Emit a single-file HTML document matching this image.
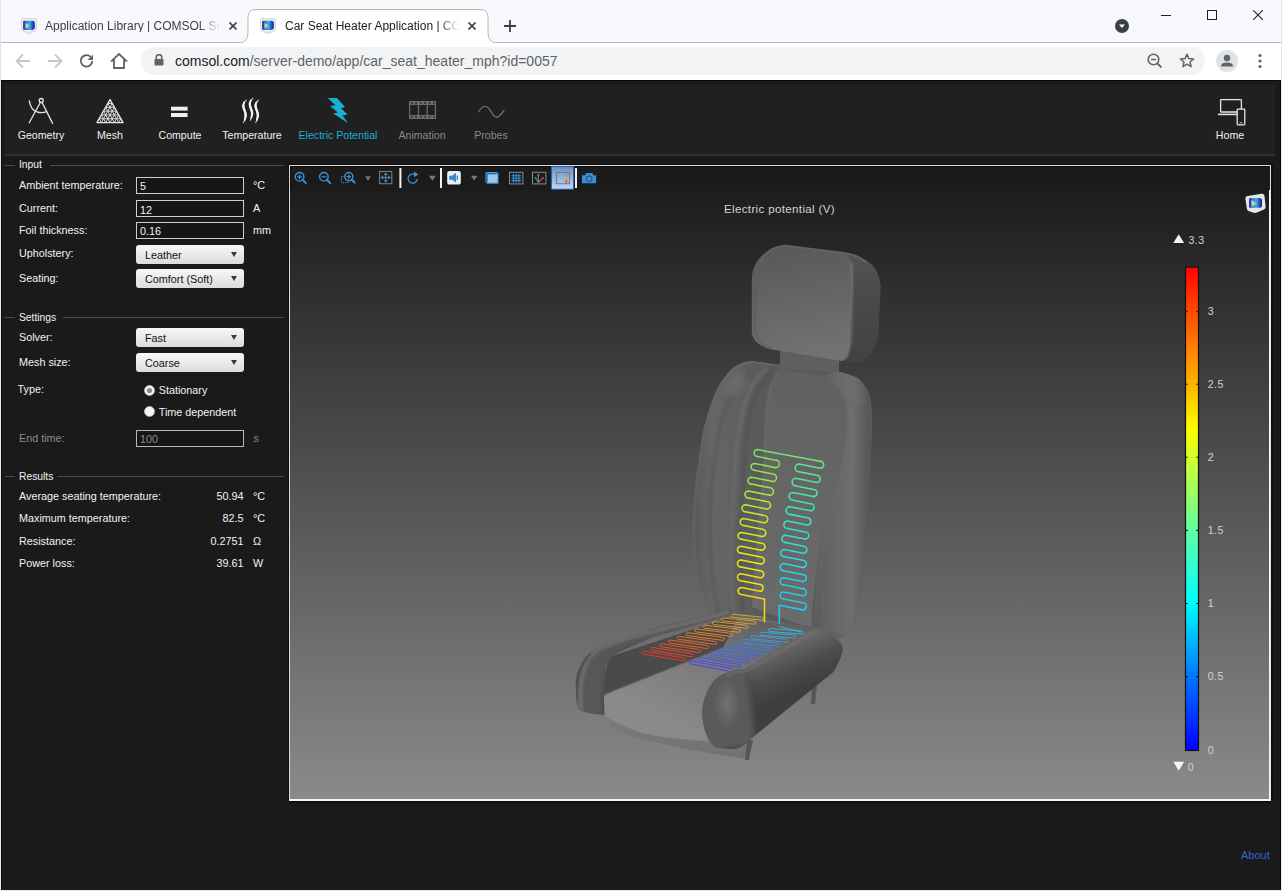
<!DOCTYPE html>
<html><head><meta charset="utf-8">
<style>
*{box-sizing:border-box}
html,body{margin:0;padding:0}
body{width:1282px;height:891px;overflow:hidden;position:relative;background:#1a1a1a;font-family:"Liberation Sans",sans-serif}
.a{position:absolute}
.t{position:absolute;white-space:nowrap;line-height:1}
/* chrome */
#tabstrip{left:0;top:0;width:1282px;height:43px;background:#f8f9fd;border-bottom:1px solid #b5b7ba}
#toolbar{left:0;top:43px;width:1282px;height:37px;background:#fff}
#omni{left:141px;top:47px;width:1064px;height:28px;border-radius:14px;background:#f1f3f4}
.tabtxt{font-size:12px;color:#3c4043}
/* app */
#app{left:1px;top:80px;width:1280px;height:810px;background:#1a1a1a;border-top:1px solid #0c0c0c;border-left:1px solid #0c0c0c;border-right:1px solid #0c0c0c}
#ribbon{left:5px;top:84px;width:1270px;height:72px;background:#202020;border-bottom:2px solid #2f2f2f}
.rl{font-size:10.6px;color:#f0f0f0;text-align:center}
.lbl{font-size:10.8px;color:#f2f2f2}
.legend{font-size:10.3px;color:#f2f2f2}
.lline{height:1px;background:#4c4c4c}
.inp{width:108px;height:17px;border:1px solid #cfcfcf;background:#161616;color:#f2f2f2;font-size:10.8px;padding:3px 0 0 4px}
.combo{width:108px;height:19px;border-radius:3px;background:linear-gradient(#f7f7f7,#dcdcdc);color:#1a1a1a;font-size:10.8px;padding:4px 0 0 8px}
.combo:after{content:"";position:absolute;right:7px;top:7px;border-left:3.5px solid transparent;border-right:3.5px solid transparent;border-top:5px solid #3a3a3a}
.val{font-size:10.8px;color:#f2f2f2;text-align:right}
</style></head>
<body>
<!-- window border -->
<div class="a" style="left:0;top:0;width:1282px;height:891px;border:1px solid #e5e6ea;border-top:0;z-index:50;pointer-events:none"></div>

<div id="tabstrip" class="a"></div>
<!-- active tab -->
<svg class="a" style="left:238px;top:9px" width="262" height="35" viewBox="0 0 262 35">
  <path d="M0 34 Q10 34 10 24 L10 8 Q10 0.5 18 0.5 L242 0.5 Q250 0.5 250 8 L250 24 Q250 34 260 34 L262 34 L262 35 L0 35 Z" fill="#fff" stroke="#b5b7ba" stroke-width="1"/>
  <rect x="0" y="34" width="262" height="2" fill="#fff"/>
</svg>
<!-- favicons -->
<svg class="a" style="left:21px;top:18px" width="16" height="16" viewBox="0 0 16 16"><path d="M0.6 1.4 Q0.6 0.6 1.4 0.6 L14.6 0.6 Q15.4 0.6 15.4 1.4 L15.4 11.6 Q15.4 12.4 14.6 12.8 L8.8 15.3 Q8 15.6 7.2 15.3 L1.4 12.8 Q0.6 12.4 0.6 11.6 Z" fill="#ececec" stroke="#cfcfcf" stroke-width="0.8"/><rect x="2.2" y="2.7" width="11.6" height="9.2" rx="2.4" fill="url(#lgb)"/><rect x="2.2" y="2.7" width="2" height="9.2" rx="1" fill="#3a3ac8"/><path d="M4.6 4.9 L4.6 10.6 L9.6 7.7 Z" fill="url(#lgy)"/></svg>
<svg class="a" style="left:260px;top:18px" width="16" height="16" viewBox="0 0 16 16"><path d="M0.6 1.4 Q0.6 0.6 1.4 0.6 L14.6 0.6 Q15.4 0.6 15.4 1.4 L15.4 11.6 Q15.4 12.4 14.6 12.8 L8.8 15.3 Q8 15.6 7.2 15.3 L1.4 12.8 Q0.6 12.4 0.6 11.6 Z" fill="#ececec" stroke="#cfcfcf" stroke-width="0.8"/><rect x="2.2" y="2.7" width="11.6" height="9.2" rx="2.4" fill="url(#lgb)"/><rect x="2.2" y="2.7" width="2" height="9.2" rx="1" fill="#3a3ac8"/><path d="M4.6 4.9 L4.6 10.6 L9.6 7.7 Z" fill="url(#lgy)"/></svg>
<div class="t tabtxt" style="left:45px;top:20px;width:175px;overflow:hidden;-webkit-mask-image:linear-gradient(90deg,#000 88%,transparent)">Application Library | COMSOL Server</div>
<div class="t tabtxt" style="left:285px;top:20px;width:174px;overflow:hidden;color:#202124;-webkit-mask-image:linear-gradient(90deg,#000 88%,transparent)">Car Seat Heater Application | COMSOL</div>
<!-- tab close -->
<svg class="a" style="left:229px;top:22px" width="8" height="8"><path d="M0.5 0.5 L7.5 7.5 M7.5 0.5 L0.5 7.5" stroke="#3c4043" stroke-width="1.6"/></svg>
<svg class="a" style="left:468px;top:22px" width="8" height="8"><path d="M0.5 0.5 L7.5 7.5 M7.5 0.5 L0.5 7.5" stroke="#3c4043" stroke-width="1.6"/></svg>
<!-- plus -->
<svg class="a" style="left:504px;top:20px" width="12" height="12"><path d="M6 0 V12 M0 6 H12" stroke="#3c4043" stroke-width="1.8"/></svg>
<!-- dropdown circle -->
<svg class="a" style="left:1115px;top:19px" width="14" height="14"><circle cx="7" cy="7" r="7" fill="#3c4043"/><path d="M4 5.5 L10 5.5 L7 9 Z" fill="#fff"/></svg>
<!-- window controls -->
<div class="a" style="left:1161px;top:15px;width:10px;height:1px;background:#202124"></div>
<div class="a" style="left:1207px;top:10px;width:10px;height:10px;border:1px solid #202124"></div>
<svg class="a" style="left:1253px;top:10px" width="10" height="10"><path d="M0 0 L10 10 M10 0 L0 10" stroke="#202124" stroke-width="1.1"/></svg>

<div id="toolbar" class="a"></div>
<!-- nav icons -->
<svg class="a" style="left:15px;top:53px" width="16" height="16" viewBox="0 0 16 16"><path d="M15 8 H2 M8 1.5 L1.5 8 L8 14.5" fill="none" stroke="#c4c6c9" stroke-width="1.8"/></svg>
<svg class="a" style="left:47px;top:53px" width="16" height="16" viewBox="0 0 16 16"><path d="M1 8 H14 M8 1.5 L14.5 8 L8 14.5" fill="none" stroke="#c4c6c9" stroke-width="1.8"/></svg>
<svg class="a" style="left:79px;top:53px" width="16" height="16" viewBox="0 0 16 16"><path d="M13.2 8 A5.7 5.7 0 1 1 11.5 3.8" fill="none" stroke="#5f6368" stroke-width="1.9"/><path d="M14 1.5 L14 7 L8.5 7 Z" fill="#5f6368"/></svg>
<svg class="a" style="left:110px;top:52px" width="18" height="18" viewBox="0 0 18 18"><path d="M9 2 L16 8.5 L14 8.5 L14 16 L4 16 L4 8.5 L2 8.5 Z" fill="none" stroke="#5f6368" stroke-width="1.8" stroke-linejoin="miter"/></svg>
<div id="omni" class="a"></div>
<svg class="a" style="left:154px;top:54px" width="10" height="12" viewBox="0 0 10 12"><path d="M2.2 5 V3.5 A2.8 2.8 0 0 1 7.8 3.5 V5" fill="none" stroke="#5f6368" stroke-width="1.5"/><rect x="0.5" y="5" width="9" height="6.5" rx="0.8" fill="#5f6368"/></svg>
<div class="t" style="left:175px;top:54px;font-size:14px;color:#5f6368"><span style="color:#202124">comsol.com</span>/server-demo/app/car_seat_heater_mph?id=0057</div>
<svg class="a" style="left:1146px;top:52px" width="18" height="18" viewBox="0 0 18 18"><circle cx="7.5" cy="7.5" r="5.3" fill="none" stroke="#5f6368" stroke-width="1.6"/><path d="M11.3 11.3 L15.5 15.5" stroke="#5f6368" stroke-width="1.8"/><path d="M5 7.5 H10" stroke="#5f6368" stroke-width="1.5"/></svg>
<svg class="a" style="left:1178px;top:52px" width="18" height="18" viewBox="0 0 18 18"><path d="M9 2.2 L10.9 6.6 L15.6 6.9 L12 10 L13.1 14.7 L9 12.2 L4.9 14.7 L6 10 L2.4 6.9 L7.1 6.6 Z" fill="none" stroke="#5f6368" stroke-width="1.5" stroke-linejoin="round"/></svg>
<svg class="a" style="left:1216px;top:50px" width="22" height="22" viewBox="0 0 22 22"><circle cx="11" cy="11" r="11" fill="#dee1e6"/><circle cx="11" cy="8" r="3.2" fill="#5f6368"/><path d="M5 16.5 Q5 12.5 11 12.5 Q17 12.5 17 16.5 Z" fill="#5f6368"/></svg>
<svg class="a" style="left:1256px;top:53px" width="8" height="16"><circle cx="4" cy="2.5" r="1.6" fill="#5f6368"/><circle cx="4" cy="8" r="1.6" fill="#5f6368"/><circle cx="4" cy="13.5" r="1.6" fill="#5f6368"/></svg>

<!-- ============ APP ============ -->
<div id="app" class="a"></div>
<div id="ribbon" class="a"></div>

<!-- ribbon items -->

<!-- ribbon icons -->
<svg class="a" style="left:24px;top:94px" width="36" height="34" viewBox="0 0 36 34" fill="none" stroke="#e6e6e6" stroke-width="1.3" stroke-linecap="round">
  <circle cx="17.2" cy="6.5" r="2"/>
  <path d="M16.3 8.5 L5.2 28.8 M18.1 8.5 L28.6 29.4"/>
  <path d="M5.3 6.9 Q7 16.5 13 17.8 Q18 19.6 22.5 17.6"/>
</svg>
<svg class="a" style="left:95px;top:98px" width="30" height="27" viewBox="0 0 30 27">
  <path d="M15 1.7000000000000028 L28 24.599999999999994 L2 24.599999999999994 Z" fill="none" stroke="#e8e8e8" stroke-width="1.4" stroke-linejoin="round"/>
  <path d="M12.83 5.52H17.17M6.33 24.60L17.17 5.52M6.33 24.60L4.17 20.78M10.67 9.33H19.33M10.67 24.60L19.33 9.33M10.67 24.60L6.33 16.97M8.50 13.15H21.50M15.00 24.60L21.50 13.15M15.00 24.60L8.50 13.15M6.33 16.97H23.67M19.33 24.60L23.67 16.97M19.33 24.60L10.67 9.33M4.17 20.78H25.83M23.67 24.60L25.83 20.78M23.67 24.60L12.83 5.52" stroke="#dcdcdc" stroke-width="1.0" fill="none"/>
</svg>
<svg class="a" style="left:170px;top:105px" width="19" height="14"><rect x="1" y="1.7" width="16.6" height="3.9" fill="#f0f0f0"/><rect x="1" y="8" width="16.6" height="4" fill="#f0f0f0"/></svg>
<svg class="a" style="left:236px;top:94px" width="32" height="34" viewBox="0 0 32 34" fill="none" stroke="#f2f2f2" stroke-linecap="round"><path d="M10.3 6.1 C6 10 7 13 8.6 16.5 C10.6 20.5 9.5 24.5 7.6 28.6" stroke-width="1.1" opacity="0.85"/><path d="M10.3 6.1 C6 10 7 13 8.6 16.5 C10.6 20.5 9.5 24.5 7.6 28.6" pathLength="100" stroke-dasharray="76 24" stroke-dashoffset="-12" stroke-width="1.9"/><path d="M10.3 6.1 C6 10 7 13 8.6 16.5 C10.6 20.5 9.5 24.5 7.6 28.6" pathLength="100" stroke-dasharray="50 50" stroke-dashoffset="-25" stroke-width="2.3"/><path d="M16.8 4.4 C12.5 8 13.5 11 15 15 C17 18.5 16 22.5 14.3 26.3" stroke-width="1.1" opacity="0.85"/><path d="M16.8 4.4 C12.5 8 13.5 11 15 15 C17 18.5 16 22.5 14.3 26.3" pathLength="100" stroke-dasharray="76 24" stroke-dashoffset="-12" stroke-width="1.9"/><path d="M16.8 4.4 C12.5 8 13.5 11 15 15 C17 18.5 16 22.5 14.3 26.3" pathLength="100" stroke-dasharray="50 50" stroke-dashoffset="-25" stroke-width="2.3"/><path d="M22.5 6.1 C18.2 10 19.2 13 20.8 16.5 C22.8 20.5 21.7 24.5 19.8 28.6" stroke-width="1.1" opacity="0.85"/><path d="M22.5 6.1 C18.2 10 19.2 13 20.8 16.5 C22.8 20.5 21.7 24.5 19.8 28.6" pathLength="100" stroke-dasharray="76 24" stroke-dashoffset="-12" stroke-width="1.9"/><path d="M22.5 6.1 C18.2 10 19.2 13 20.8 16.5 C22.8 20.5 21.7 24.5 19.8 28.6" pathLength="100" stroke-dasharray="50 50" stroke-dashoffset="-25" stroke-width="2.3"/></svg>
<svg class="a" style="left:320px;top:92px" width="36" height="36" viewBox="0 0 36 36"><path d="M7.7 6.1 L17 6.1 L25 15 L21 16.2 L27.5 22.6 L22.6 23.4 L27.9 31.1 L13.3 21.4 L17.8 20.6 L10.1 14.1 L15.4 13.3 Z" fill="#19b1d2"/></svg>
<svg class="a" style="left:409px;top:101px" width="27" height="18" viewBox="0 0 27 18">
  <rect x="0.6" y="0.6" width="25.8" height="16.8" fill="none" stroke="#6b6b6b" stroke-width="1.2"/>
  <rect x="0" y="0" width="27" height="4" fill="#6b6b6b"/><rect x="0" y="14" width="27" height="4" fill="#6b6b6b"/>
  <path d="M9.5 0 V18 M18.2 0 V18" stroke="#6b6b6b" stroke-width="1.3"/>
  <g fill="#2a2a2a"><rect x="2" y="1.3" width="1.6" height="1.6"/><rect x="6.3" y="1.3" width="1.6" height="1.6"/><rect x="11" y="1.3" width="1.6" height="1.6"/><rect x="15.3" y="1.3" width="1.6" height="1.6"/><rect x="19.8" y="1.3" width="1.6" height="1.6"/><rect x="24" y="1.3" width="1.6" height="1.6"/>
  <rect x="2" y="15.1" width="1.6" height="1.6"/><rect x="6.3" y="15.1" width="1.6" height="1.6"/><rect x="11" y="15.1" width="1.6" height="1.6"/><rect x="15.3" y="15.1" width="1.6" height="1.6"/><rect x="19.8" y="15.1" width="1.6" height="1.6"/><rect x="24" y="15.1" width="1.6" height="1.6"/></g>
</svg>
<svg class="a" style="left:476px;top:102px" width="32" height="18" viewBox="0 0 32 18"><path d="M2.9 9.8 C5 5.5 7.5 4.4 9 4.4 C12 4.4 14 8 16 11 C18 14.5 19.5 15.2 20.6 15.2 C23 15.2 25.5 12 28 8.5" fill="none" stroke="#6b6b6b" stroke-width="1.4" stroke-linecap="round"/></svg>
<svg class="a" style="left:1216px;top:97px" width="32" height="30" viewBox="0 0 32 30" fill="none" stroke="#e6e6e6">
  <rect x="4.6" y="2.6" width="20.8" height="12.4" rx="0.8" stroke-width="1.3"/>
  <path d="M2 17.4 H21" stroke-width="1.6"/>
  <rect x="21.2" y="12.2" width="7.6" height="15.6" rx="0.8" fill="#202020" stroke-width="1.3"/>
  <path d="M23.5 25.8 H26.5" stroke-width="0.8"/>
</svg>
<!-- ribbon labels -->
<div class="t rl" style="left:1px;top:130px;width:80px">Geometry</div>
<div class="t rl" style="left:70px;top:130px;width:80px">Mesh</div>
<div class="t rl" style="left:140px;top:130px;width:80px">Compute</div>
<div class="t rl" style="left:212px;top:130px;width:80px">Temperature</div>
<div class="t rl" style="left:288px;top:130px;width:100px;color:#1eaed0">Electric Potential</div>
<div class="t rl" style="left:382px;top:130px;width:80px;color:#8a8a8a">Animation</div>
<div class="t rl" style="left:451px;top:130px;width:80px;color:#8a8a8a">Probes</div>
<div class="t rl" style="left:1190px;top:130px;width:80px">Home</div>


<!-- left panel -->
<!-- left panel -->
<div class="a lline" style="left:5px;top:165px;width:10px"></div>
<div class="a lline" style="left:50px;top:165px;width:234px"></div>
<div class="t legend" style="left:19px;top:160.0px;">Input</div>

<div class="a lline" style="left:5px;top:317px;width:10px"></div>
<div class="a lline" style="left:63px;top:317px;width:221px"></div>
<div class="t legend" style="left:19px;top:313.0px;">Settings</div>

<div class="a lline" style="left:5px;top:476px;width:10px"></div>
<div class="a lline" style="left:57px;top:476px;width:227px"></div>
<div class="t legend" style="left:19px;top:472.0px;">Results</div>

<div class="t lbl" style="left:19px;top:179.6px;">Ambient temperature:</div>

<div class="a inp" style="left:136px;top:177px"></div>
<div class="t lbl" style="left:140px;top:181.3px;">5</div>

<div class="t lbl" style="left:253px;top:179.6px;">°C</div>

<div class="t lbl" style="left:19px;top:202.8px;">Current:</div>

<div class="a inp" style="left:136px;top:200px"></div>
<div class="t lbl" style="left:140px;top:204.5px;">12</div>

<div class="t lbl" style="left:253px;top:202.8px;">A</div>

<div class="t lbl" style="left:19px;top:224.6px;">Foil thickness:</div>

<div class="a inp" style="left:136px;top:222px"></div>
<div class="t lbl" style="left:140px;top:226.3px;">0.16</div>

<div class="t lbl" style="left:253px;top:224.6px;">mm</div>

<div class="t lbl" style="left:19px;top:247.5px;">Upholstery:</div>

<div class="a combo" style="left:136px;top:245px"></div>
<div class="t lbl" style="left:145px;top:249.5px;color:#111">Leather</div>

<div class="t lbl" style="left:19px;top:273.0px;">Seating:</div>

<div class="a combo" style="left:136px;top:269px"></div>
<div class="t lbl" style="left:145px;top:274.0px;color:#111">Comfort (Soft)</div>

<div class="t lbl" style="left:19px;top:331.8px;">Solver:</div>

<div class="a combo" style="left:136px;top:328px"></div>
<div class="t lbl" style="left:145px;top:332.8px;color:#111">Fast</div>

<div class="t lbl" style="left:19px;top:357.0px;">Mesh size:</div>

<div class="a combo" style="left:136px;top:353px"></div>
<div class="t lbl" style="left:145px;top:358.0px;color:#111">Coarse</div>

<div class="t lbl" style="left:17.5px;top:384.2px;">Type:</div>

<svg class="a" style="left:144px;top:385px" width="11" height="11"><circle cx="5.5" cy="5.5" r="5" fill="#f4f4f4" stroke="#d0d0d0" stroke-width="0.6"/><circle cx="5.5" cy="5.5" r="2.6" fill="#8c8c8c"/></svg>
<div class="t lbl" style="left:158.7px;top:384.8px;">Stationary</div>

<svg class="a" style="left:144px;top:406px" width="11" height="11"><circle cx="5.5" cy="5.5" r="5" fill="#f4f4f4" stroke="#d0d0d0" stroke-width="0.6"/></svg>
<div class="t lbl" style="left:158.7px;top:406.6px;">Time dependent</div>

<div class="t lbl" style="left:19px;top:433.4px;color:#8a8a8a">End time:</div>

<div class="a inp" style="left:136px;top:430px;border-color:#b8b8b8"></div>
<div class="t lbl" style="left:140px;top:434.1px;color:#8a8a8a">100</div>

<div class="t lbl" style="left:253.5px;top:433.4px;color:#8a8a8a">s</div>

<div class="t lbl" style="left:19px;top:491.1px;">Average seating temperature:</div>

<div class="t val" style="left:163.5px;top:491.1px;width:80px">50.94</div>

<div class="t lbl" style="left:253px;top:491.1px;">°C</div>

<div class="t lbl" style="left:19px;top:512.8px;">Maximum temperature:</div>

<div class="t val" style="left:163.5px;top:512.8px;width:80px">82.5</div>

<div class="t lbl" style="left:253px;top:512.8px;">°C</div>

<div class="t lbl" style="left:19px;top:535.6px;">Resistance:</div>

<div class="t val" style="left:163.5px;top:535.6px;width:80px">0.2751</div>

<div class="t lbl" style="left:253px;top:535.6px;">Ω</div>

<div class="t lbl" style="left:19px;top:557.8px;">Power loss:</div>

<div class="t val" style="left:163.5px;top:557.8px;width:80px">39.61</div>

<div class="t lbl" style="left:253px;top:557.8px;">W</div>


<!-- graphics -->

<!-- graphics -->
<div class="a" style="left:288px;top:164px;width:985px;height:639px;background:#0e0e0e"></div>
<div class="a" style="left:289px;top:165px;width:982px;height:636px;border-style:solid;border-color:#e0e0e0 #e6e6e6 #f6f6f6 #dcdcdc;border-width:1px 1px 2px 1px;background:#1b1b1b;box-shadow:inset 1px 1px 0 #0c0c0c"></div>
<div class="a" style="left:290px;top:190px;width:979px;height:609px;background:linear-gradient(#1d1d1d 0px,#1d1d1d 2px,#8a8a8a 608px)"></div>
<div class="a" style="left:1269px;top:190px;width:1px;height:610px;background:#f6f6f6"></div>
<!-- gfx toolbar -->
<svg class="a" style="left:290px;top:166px" width="320" height="25" viewBox="290 166 320 25">
  <g fill="none" stroke="#3592d8" stroke-width="1.3">
    <rect x="341.3" y="176.6" width="7.2" height="6" stroke-dasharray="1.3 0.9" stroke-width="1"/>
    <circle cx="299.6" cy="176.8" r="4.3" stroke-width="1.4"/><path d="M297.2 176.8 H302 M299.6 174.4 V179.2" stroke-width="1.2"/>
    <circle cx="323.9" cy="176.8" r="4.3" stroke-width="1.4"/><path d="M321.5 176.8 H326.3" stroke-width="1.2"/>
    <circle cx="348.8" cy="176.6" r="4.1" fill="#1b1b1b" stroke-width="1.4"/><path d="M346.6 176.6 H351 M348.8 174.4 V178.8" stroke-width="1.2"/>
    <path d="M302.6 179.8 L305.9 183.1 M326.9 179.8 L330.2 183.1 M351.7 179.5 L354.6 182.6" stroke-width="2" stroke-linecap="round"/>
  </g>
  <path d="M365.1 176.3 H370.9 L368 180.7 Z" fill="#7a7a7a"/>
  <rect x="379.6" y="171.5" width="12.2" height="12.2" fill="none" stroke="#7a7a7a" stroke-width="1.1"/>
  <path d="M385.7 174.2 V181 M382.3 177.6 H389.1" stroke="#8a8a8a" stroke-width="0.9"/>
  <g fill="#3592d8"><path d="M385.7 172.4 L383.7 175 H387.7Z"/><path d="M385.7 182.8 L383.7 180.2 H387.7Z"/><path d="M380.5 177.6 L383.1 175.6 V179.6Z"/><path d="M390.9 177.6 L388.3 175.6 V179.6Z"/></g>
  <rect x="399.4" y="168" width="2" height="20" fill="#f2f2f2"/>
  <path d="M417.3 178.8 A4.6 4.6 0 1 1 414.6 174.4" fill="none" stroke="#2f86c8" stroke-width="1.5"/>
  <path d="M414 171.5 L418.4 174.4 L414 177.2Z" fill="#3592d8"/>
  <path d="M429 175.8 H435.8 L432.4 180.8 Z" fill="#7a7a7a"/>
  <rect x="440" y="168" width="2" height="20" fill="#f2f2f2"/>
  <rect x="447.2" y="171" width="13.6" height="13.6" rx="2.2" fill="#efefef"/>
  <path d="M449.2 175.8 H452 L456 172.8 V182.6 L452 179.8 H449.2Z" fill="#3a8ad2"/><rect x="456.6" y="175.6" width="1.4" height="4.4" fill="#3a8ad2"/>
  <path d="M471 175.8 H477.4 L474.2 180.6 Z" fill="#7a7a7a"/>
  <rect x="487.5" y="174" width="10.5" height="9.2" fill="#9cc8f0" stroke="#3592d8" stroke-width="1.1"/>
  <path d="M486 172.6 H496.5 L498 174 M486 172.6 V181.8 L487.5 183.2" fill="none" stroke="#4aa0e6" stroke-width="1.1"/>
  <rect x="509.5" y="172.3" width="13.4" height="11.6" fill="#1b1b1b" stroke="#8a8a8a" stroke-width="1"/>
  <path d="M511.5 175.8 H521 M511.5 178.2 H521 M511.5 180.6 H521 M513.4 173.8 V182.6 M516.2 173.8 V182.6 M519 173.8 V182.6" stroke="#3592d8" stroke-width="1.1"/>
  <rect x="532.5" y="172.3" width="13.4" height="11.6" fill="#1b1b1b" stroke="#8a8a8a" stroke-width="1"/>
  <path d="M538.4 182.5 V174.3" stroke="#3a9ae6" stroke-width="1.1"/><path d="M538.4 173.4 L537 175.6 H539.8Z" fill="#3a9ae6"/>
  <path d="M538.4 182.5 L535.8 178.3" stroke="#3bb85a" stroke-width="1.1"/><circle cx="535.6" cy="178" r="0.9" fill="#3bb85a"/>
  <path d="M538.4 182.5 L543 177.8" stroke="#e03a80" stroke-width="1.1"/><circle cx="543" cy="177.8" r="0.9" fill="#e03a80"/>
  <defs><linearGradient id="selg" x1="0" y1="0" x2="0" y2="1"><stop offset="0" stop-color="#6b8dc5"/><stop offset="1" stop-color="#bcdcf8"/></linearGradient>
  <linearGradient id="legg" x1="0" y1="0" x2="0" y2="1"><stop offset="0" stop-color="#3a9ae6"/><stop offset="0.5" stop-color="#f5b010"/><stop offset="1" stop-color="#ee2a3a"/></linearGradient></defs>
  <rect x="551.4" y="166.6" width="22.2" height="22.6" fill="url(#selg)" stroke="#2c5fae" stroke-width="1"/>
  <rect x="556.5" y="172.5" width="13" height="11.2" fill="none" stroke="#777" stroke-width="1"/>
  <rect x="565.3" y="173.8" width="1.9" height="8.8" fill="url(#legg)"/>
  <rect x="575" y="168" width="2" height="20" fill="#f2f2f2"/>
  <path d="M582 175.2 H585 L586.2 173 H592.3 L593.4 175.2 H596.1 V183.2 H582Z" fill="#3a8fd6"/>
  <circle cx="589.2" cy="178.8" r="2.9" fill="#3a8fd6" stroke="#1b3f66" stroke-width="0.9"/>
</svg>
<div class="t" style="left:724px;top:203.4px;font-size:11.6px;letter-spacing:0.33px;color:#d4d4d4">Electric potential (V)</div>
<!-- COMSOL logo in view -->
<svg class="a" style="left:1240px;top:190px" width="30" height="26" viewBox="1240 190 30 26">
  <defs><linearGradient id="lgb" x1="0" y1="0" x2="1" y2="0"><stop offset="0" stop-color="#2a4ed8"/><stop offset="0.55" stop-color="#3aa8f0"/><stop offset="1" stop-color="#0a1a9a"/></linearGradient>
  <linearGradient id="lgy" x1="0" y1="0" x2="1" y2="0"><stop offset="0" stop-color="#f8f060"/><stop offset="1" stop-color="#e8d020" stop-opacity="0.4"/></linearGradient></defs>
  <path d="M1245.5 199 Q1245 196.5 1247.5 196 L1261.5 193.8 Q1264 193.5 1264.5 196 L1265.6 206.5 Q1266 208.5 1264 209.5 L1257 212.5 Q1255 213.2 1253 212.6 L1249 211.3 Q1247 210.5 1246.8 208.5 Z" fill="#e6e6e6"/>
  <rect x="1249" y="198" width="13" height="9.8" rx="2.6" fill="url(#lgb)"/>
  <rect x="1249" y="198" width="2.2" height="9.8" rx="1" fill="#3a3ac8"/>
  <path d="M1251.6 200.2 L1251.6 206.6 L1257.6 203.4 Z" fill="url(#lgy)"/>
</svg>
<!-- colorbar -->
<svg class="a" style="left:1165px;top:228px" width="70" height="550" viewBox="1165 228 70 550">
  <defs><linearGradient id="cb" x1="0" y1="0" x2="0" y2="1">
   <stop offset="0" stop-color="#ff0000"/><stop offset="0.091" stop-color="#ff4a00"/><stop offset="0.242" stop-color="#ffb400"/><stop offset="0.337" stop-color="#ffff00"/><stop offset="0.393" stop-color="#d4ff2a"/><stop offset="0.544" stop-color="#60ffa0"/><stop offset="0.693" stop-color="#00ffff"/><stop offset="0.846" stop-color="#0078ff"/><stop offset="1" stop-color="#0000ff"/>
  </linearGradient></defs>
  <rect x="1185.5" y="267" width="13" height="483.5" fill="url(#cb)" stroke="#111" stroke-width="1.2"/>
  <g stroke="#111" stroke-width="1.1">
   <path d="M1185.5 311.3 h2.2 M1198.5 311.3 h-2.2 M1185.5 384.3 h2.2 M1198.5 384.3 h-2.2 M1185.5 457.3 h2.2 M1198.5 457.3 h-2.2 M1185.5 530.4 h2.2 M1198.5 530.4 h-2.2 M1185.5 603.5 h2.2 M1198.5 603.5 h-2.2 M1185.5 676.6 h2.2 M1198.5 676.6 h-2.2"/>
  </g>
  <path d="M1173.3 243 L1178.7 234.2 L1184.1 243 Z" fill="#f4f4f4"/>
  <path d="M1173.3 761.7 L1184.1 761.7 L1178.7 770.7 Z" fill="#f4f4f4"/>
  <g font-family="Liberation Sans" font-size="10.6" fill="#d2d2d2" letter-spacing="0.4">
   <text x="1188.5" y="244">3.3</text>
   <text x="1207.8" y="315">3</text><text x="1207.8" y="388">2.5</text><text x="1207.8" y="461">2</text><text x="1207.8" y="534">1.5</text><text x="1207.8" y="607.3">1</text><text x="1207.8" y="680.4">0.5</text><text x="1207.8" y="753.5">0</text>
   <text x="1187.8" y="770.5">0</text>
  </g>
</svg>
<svg class="a" style="left:290px;top:190px" width="980" height="610" viewBox="290 190 980 610">
<defs>
<linearGradient id="hrF" x1="0" y1="0" x2="0.15" y2="1"><stop offset="0" stop-color="#575757"/><stop offset="1" stop-color="#727272"/></linearGradient>
<linearGradient id="hrS" x1="0" y1="0" x2="0" y2="1"><stop offset="0" stop-color="#545454"/><stop offset="0.4" stop-color="#4a4a4a"/><stop offset="1" stop-color="#424242"/></linearGradient>
<linearGradient id="brB" x1="0" y1="0" x2="0" y2="1"><stop offset="0" stop-color="#555"/><stop offset="1" stop-color="#626262"/></linearGradient>
<linearGradient id="brC" x1="0" y1="0" x2="0" y2="1"><stop offset="0" stop-color="#5c5c5c"/><stop offset="1" stop-color="#6a6a6a"/></linearGradient>
<linearGradient id="brL" x1="0" y1="0" x2="1" y2="0"><stop offset="0" stop-color="#505050"/><stop offset="0.6" stop-color="#626262"/><stop offset="1" stop-color="#5a5a5a"/></linearGradient>
<linearGradient id="brR" x1="0" y1="0" x2="1" y2="0"><stop offset="0" stop-color="#5e5e5e"/><stop offset="0.5" stop-color="#686868"/><stop offset="1" stop-color="#4e4e4e"/></linearGradient>
<linearGradient id="seatF" x1="0" y1="0" x2="0" y2="1"><stop offset="0" stop-color="#8a8a8a"/><stop offset="1" stop-color="#858585"/></linearGradient>
<linearGradient id="lbF" x1="0" y1="0" x2="1" y2="0"><stop offset="0" stop-color="#505050"/><stop offset="0.45" stop-color="#6e6e6e"/><stop offset="1" stop-color="#505050"/></linearGradient>
<linearGradient id="rbS" x1="0" y1="0" x2="0.3" y2="1"><stop offset="0" stop-color="#5a5a5a"/><stop offset="0.5" stop-color="#474747"/><stop offset="1" stop-color="#3e3e3e"/></linearGradient>
<linearGradient id="rbF" x1="0" y1="0" x2="1" y2="0"><stop offset="0" stop-color="#555"/><stop offset="0.35" stop-color="#707070"/><stop offset="1" stop-color="#4a4a4a"/></linearGradient>
</defs>
<defs>
<linearGradient id="brB2" x1="0" y1="0" x2="0" y2="1"><stop offset="0" stop-color="#575757"/><stop offset="1" stop-color="#606060"/></linearGradient>
<linearGradient id="brC2" x1="0" y1="0" x2="0" y2="1"><stop offset="0" stop-color="#616161"/><stop offset="1" stop-color="#6b6b6b"/></linearGradient>
<linearGradient id="brR2" gradientUnits="userSpaceOnUse" x1="812" y1="0" x2="868" y2="0"><stop offset="0" stop-color="#545454"/><stop offset="0.18" stop-color="#626262"/><stop offset="0.72" stop-color="#6e6e6e"/><stop offset="1" stop-color="#585858"/></linearGradient>
<linearGradient id="brL2" gradientUnits="userSpaceOnUse" x1="692" y1="0" x2="760" y2="0"><stop offset="0" stop-color="#585858"/><stop offset="0.3" stop-color="#666666"/><stop offset="0.65" stop-color="#606060"/><stop offset="1" stop-color="#5a5a5a"/></linearGradient>
<filter id="bl3" x="-30%" y="-30%" width="160%" height="160%"><feGaussianBlur stdDeviation="3.5"/></filter>
<filter id="bl15" x="-30%" y="-30%" width="160%" height="160%"><feGaussianBlur stdDeviation="1.5"/></filter>
</defs>
<path d="M734.4 366.9 C740 362.5 746 361 752.2 360.9 L773 363.9 L838 371.3 C848 374 855 376 860.4 380.2 C866 386 869 392 870.7 399.4 C872 410 872.2 420 872.2 429 L869 495 L864 562 C861 590 858 605 856 616 L847 636 L729 612 L711 614 C706 608 704 604 703.6 601 C697 585 693 565 692.6 528.7 C693 505 695 485 698.9 458.7 C701 440 704 425 707.8 414.3 C711 403 715 393 719.6 384.6 C724 377 729 371 734.4 366.9 Z" fill="url(#brL2)"/>
<clipPath id="brclip"><path d="M734.4 366.9 C740 362.5 746 361 752.2 360.9 L773 363.9 L838 371.3 C848 374 855 376 860.4 380.2 C866 386 869 392 870.7 399.4 C872 410 872.2 420 872.2 429 L869 495 L864 562 C861 590 858 605 856 616 L847 636 L729 612 L711 614 C706 608 704 604 703.6 601 C697 585 693 565 692.6 528.7 C693 505 695 485 698.9 458.7 C701 440 704 425 707.8 414.3 C711 403 715 393 719.6 384.6 C724 377 729 371 734.4 366.9 Z"/></clipPath>
<g clip-path="url(#brclip)">
<path d="M823.3 375.7 L838 371.3 C848 374 855 376 860.4 380.2 C866 386 869 392 870.7 399.4 C872 410 872.2 420 872.2 429 L869 495 L864 562 C861 590 858 605 856 616 L847 636 L812 629 C812 610 813 600 813.7 595.7 C817 560 820 545 823.8 528 C830 505 835 490 838 480 C843 460 846 445 847 429 L847 406.9 C845 398 842 393 838 389 C834 383 829 378 823.3 375.7 Z" fill="url(#brR2)"/>
<path d="M736 366 C728 372 723 378 719.6 384.6 C715 393 711 403 707.8 414.3 C704 425 701 440 698.9 458.7 C695 485 693 505 693.5 528.7 C694 565 697 585 704.5 601" fill="none" stroke="#6c6c6c" stroke-width="2.4" opacity="0.7" filter="url(#bl1)"/>
<path d="M750 372 C738 385 728 400 722 420 C715 445 711 480 710 520 C710 560 713 590 718 612" fill="none" stroke="#4e4e4e" stroke-width="3" opacity="0.45" filter="url(#bl15)"/>
<ellipse cx="736" cy="384" rx="9" ry="14" fill="#747474" opacity="0.55" filter="url(#bl3)" transform="rotate(35 736 384)"/>
<ellipse cx="856" cy="394" rx="7" ry="13" fill="#707070" opacity="0.45" filter="url(#bl3)" transform="rotate(-30 856 394)"/>
<path d="M722 382 C730 370 740 363 752 361.5 L773 364.5" fill="none" stroke="#747474" stroke-width="2" opacity="0.6" filter="url(#bl1)"/>
<path d="M767 368.3 C758 376 752 384 749.3 392 C744 405 741 417 738.9 429 C736 446 735 462 734.4 480 C733 505 731 530 730.5 560 C731 585 732 600 733.5 613" fill="none" stroke="#6c6c6c" stroke-width="4" opacity="0.8" filter="url(#bl15)"/>
<path d="M773 371 C764 380 757 390 753.5 400 C749 415 747 430 745.5 445 C743 470 742 500 741 530 C740 560 741 590 743 612" fill="none" stroke="#505050" stroke-width="3" opacity="0.7" filter="url(#bl15)"/>
<path d="M778.9 369.8 L823.3 375.7 C829 378 834 383 838 389 C842 393 845 398 847 406.9 L847 429 C846 445 843 460 838 480 C835 490 830 505 823.8 528 C820 545 817 560 813.7 595.7 C813 600 812 610 812 629 L752 607 C755 560 758 530 759.5 500 L762.6 480 C763.5 455 764.5 430 765.6 414 C766.5 403 767.5 397 768.5 392 C771 383 774.5 376 778.9 369.8 Z" fill="url(#brC2)"/>
<path d="M778 372 C773 380 769.5 388 768 396 C766 410 765 440 764 480 C762 520 758 570 755 607" fill="none" stroke="#707070" stroke-width="2" opacity="0.55" filter="url(#bl1)"/>
<path d="M840 385 C845 393 848 402 848 415 C848 440 845 460 839 482 C833 505 826 530 822 550 C818 570 816 590 815 625" fill="none" stroke="#6e6e6e" stroke-width="3" opacity="0.5" filter="url(#bl15)"/>
<path d="M752.2 361.5 L773 364.5 L838 372 C848 374.5 855 376.5 860.4 381" fill="none" stroke="#6c6c6c" stroke-width="1.6" opacity="0.7"/>
</g>
<path d="M780 349 L839 359 L839 372 L780 369.5 Z" fill="#5f5f5f"/>
<path d="M842 252 C852 253 858 255 861 257.3 C868 261 874 265 876.8 271.4 C879 276 880.7 282 880.7 287.2 L878.4 334.3 C877 342 875 347 873.6 350 C870 356 866 359 862.6 361 C858 362.5 852 363 847 362.6 Z" fill="url(#hrS)"/>
<path d="M786 245.5 L842 252.6 C849 255 853 262 853.2 271.4 L850 345 C849 355 846 360 842 361 L775 350 C760 348 752 340 751.8 331.2 L751.8 279.3 C752 262 765 247 786 245.5 Z" fill="url(#hrF)"/>
<path d="M760 262 C767 250 775 246 786 245.5 L842 252.6 C852 254 860 257 866 263" fill="none" stroke="#6a6a6a" stroke-width="1.6" opacity="0.8"/>
<path d="M851 262 C853 275 852.5 300 851.5 330 C851 345 849 354 845 359" fill="none" stroke="#747474" stroke-width="2.2" opacity="0.7" filter="url(#bl1)"/>
<path d="M755 285 L755 330 C756 340 762 347 772 349" fill="none" stroke="#505050" stroke-width="2" opacity="0.5" filter="url(#bl1)"/>
<g fill="none" stroke-width="1.55" stroke-linecap="round" stroke-linejoin="round">
<path d="M757.55 449.60 L820.16 461.20" stroke="#74e670"/>
<path d="M757.55 456.50 A3.45 3.45 0 0 1 757.55 449.60 " stroke="#76e25c"/>
<path d="M757.55 456.50 L775.75 460.14 A3.45 3.45 0 0 1 775.75 467.64" stroke="#7ee357"/>
<path d="M754.55 470.30 A3.45 3.45 0 0 1 754.55 463.40 L775.75 467.64" stroke="#87e452"/>
<path d="M754.55 470.30 L772.75 473.94 A3.45 3.45 0 0 1 772.75 481.46" stroke="#8fe54d"/>
<path d="M751.45 484.10 A3.45 3.45 0 0 1 751.45 477.20 L772.75 481.46" stroke="#97e648"/>
<path d="M751.45 484.10 L769.75 487.76 A3.45 3.45 0 0 1 769.75 495.26" stroke="#9fe743"/>
<path d="M748.45 497.90 A3.45 3.45 0 0 1 748.45 491.00 L769.75 495.26" stroke="#a8e83e"/>
<path d="M748.45 497.90 L766.75 501.56 A3.45 3.45 0 0 1 766.75 509.06" stroke="#b0e938"/>
<path d="M745.45 511.70 A3.45 3.45 0 0 1 745.45 504.80 L766.75 509.06" stroke="#b8ea33"/>
<path d="M745.45 511.70 L764.15 515.44 A3.45 3.45 0 0 1 764.15 522.70" stroke="#c0ec2e"/>
<path d="M743.65 525.50 A3.45 3.45 0 0 1 743.65 518.60 L764.15 522.70" stroke="#c7ec2a"/>
<path d="M743.65 525.50 L762.15 529.20 A3.45 3.45 0 0 1 762.15 536.52" stroke="#ceeb26"/>
<path d="M741.55 539.30 A3.45 3.45 0 0 1 741.55 532.40 L762.15 536.52" stroke="#d4eb22"/>
<path d="M741.55 539.30 L761.45 543.28 A3.45 3.45 0 0 1 761.45 550.30" stroke="#daea1e"/>
<path d="M740.95 553.10 A3.45 3.45 0 0 1 740.95 546.20 L761.45 550.30" stroke="#e0ea1b"/>
<path d="M740.95 553.10 L760.85 557.08 A3.45 3.45 0 0 1 760.85 563.98" stroke="#e7e917"/>
<path d="M740.95 566.90 A3.45 3.45 0 0 1 740.95 560.00 L760.85 563.98" stroke="#ede813"/>
<path d="M740.95 566.90 L760.25 570.76 A3.45 3.45 0 0 1 760.25 577.66" stroke="#f2e710"/>
<path d="M740.95 580.70 A3.45 3.45 0 0 1 740.95 573.80 L760.25 577.66" stroke="#f3e211"/>
<path d="M740.95 580.70 L760.25 584.56 A3.45 3.45 0 0 1 760.25 591.34" stroke="#f3de12"/>
<path d="M741.55 594.50 A3.45 3.45 0 0 1 741.55 587.60 L760.25 591.34" stroke="#f4d913"/>
<path d="M741.55 594.50 L764.50 599.09 L764.50 622.5" stroke="#f4d414"/>
<path d="M820.16 468.28 A3.54 3.54 0 0 0 820.16 461.20 " stroke="#62e68e"/>
<path d="M820.16 468.28 L799.04 464.06 A3.54 3.54 0 0 0 799.04 471.84" stroke="#5ce694"/>
<path d="M816.66 482.44 A3.54 3.54 0 0 0 816.66 475.36 L799.04 471.84" stroke="#57e699"/>
<path d="M816.66 482.44 L796.04 478.32 A3.54 3.54 0 0 0 796.04 486.02" stroke="#51e69f"/>
<path d="M813.56 496.60 A3.54 3.54 0 0 0 813.56 489.52 L796.04 486.02" stroke="#4be6a5"/>
<path d="M813.56 496.60 L792.94 492.48 A3.54 3.54 0 0 0 792.94 500.16" stroke="#45e6ab"/>
<path d="M810.56 510.76 A3.54 3.54 0 0 0 810.56 503.68 L792.94 500.16" stroke="#40e6b0"/>
<path d="M810.56 510.76 L789.94 506.64 A3.54 3.54 0 0 0 789.94 514.38" stroke="#3ae6b6"/>
<path d="M807.26 524.92 A3.54 3.54 0 0 0 807.26 517.84 L789.94 514.38" stroke="#36e5bd"/>
<path d="M807.26 524.92 L787.64 521.00 A3.54 3.54 0 0 0 787.64 528.48" stroke="#33e4c4"/>
<path d="M805.26 539.08 A3.54 3.54 0 0 0 805.26 532.00 L787.64 528.48" stroke="#30e2cb"/>
<path d="M805.26 539.08 L785.54 535.14 A3.54 3.54 0 0 0 785.54 542.60" stroke="#2de1d2"/>
<path d="M803.36 553.24 A3.54 3.54 0 0 0 803.36 546.16 L785.54 542.60" stroke="#2ae0d9"/>
<path d="M803.36 553.24 L784.34 549.44 A3.54 3.54 0 0 0 784.34 556.64" stroke="#27dee0"/>
<path d="M802.76 567.40 A3.54 3.54 0 0 0 802.76 560.32 L784.34 556.64" stroke="#24dde7"/>
<path d="M802.76 567.40 L783.64 563.58 A3.54 3.54 0 0 0 783.64 570.66" stroke="#22dbec"/>
<path d="M802.76 581.56 A3.54 3.54 0 0 0 802.76 574.48 L783.64 570.66" stroke="#22d8ed"/>
<path d="M802.76 581.56 L783.64 577.74 A3.54 3.54 0 0 0 783.64 584.82" stroke="#21d5ed"/>
<path d="M802.76 595.72 A3.54 3.54 0 0 0 802.76 588.64 L783.64 584.82" stroke="#21d2ee"/>
<path d="M802.76 595.72 L783.64 591.90 A3.54 3.54 0 0 0 783.64 598.98" stroke="#21ceef"/>
<path d="M802.76 609.88 A3.54 3.54 0 0 0 802.76 602.80 L783.64 598.98" stroke="#20cbef"/>
<path d="M802.76 609.88 L779.30 605.19 L779.30 626" stroke="#20c8f0"/>
</g>
<defs>
<linearGradient id="sfront" gradientUnits="userSpaceOnUse" x1="760" y1="625" x2="700" y2="740"><stop offset="0" stop-color="#626262"/><stop offset="0.45" stop-color="#7a7a7a"/><stop offset="1" stop-color="#8a8a8a"/></linearGradient>
<linearGradient id="skirt" x1="0" y1="0" x2="0" y2="1"><stop offset="0" stop-color="#7c7c7c"/><stop offset="1" stop-color="#717171"/></linearGradient>
<linearGradient id="tubeL" gradientUnits="userSpaceOnUse" x1="660" y1="624" x2="666" y2="646"><stop offset="0" stop-color="#5a5a5a"/><stop offset="0.3" stop-color="#7a7a7a"/><stop offset="0.55" stop-color="#5e5e5e"/><stop offset="1" stop-color="#4e4e4e"/></linearGradient>
<linearGradient id="lendF" gradientUnits="userSpaceOnUse" x1="575" y1="0" x2="606" y2="0"><stop offset="0" stop-color="#4c4c4c"/><stop offset="0.55" stop-color="#6c6c6c"/><stop offset="1" stop-color="#585858"/></linearGradient>
<linearGradient id="rside" gradientUnits="userSpaceOnUse" x1="780" y1="655" x2="795" y2="712"><stop offset="0" stop-color="#5c5c5c"/><stop offset="0.35" stop-color="#4c4c4c"/><stop offset="1" stop-color="#3e3e3e"/></linearGradient>
<linearGradient id="rend" gradientUnits="userSpaceOnUse" x1="702" y1="0" x2="752" y2="0"><stop offset="0" stop-color="#4e4e4e"/><stop offset="0.4" stop-color="#6c6c6c"/><stop offset="1" stop-color="#4a4a4a"/></linearGradient>
<filter id="bl1" x="-20%" y="-20%" width="140%" height="140%"><feGaussianBlur stdDeviation="1.2"/></filter>
<filter id="bl2" x="-20%" y="-20%" width="140%" height="140%"><feGaussianBlur stdDeviation="2.5"/></filter>
</defs>
<path d="M604 712 L610 727 C640 742 700 752 740 757.7 L749 759.5 L748 744 L740 744 C700 741 660 738 640 733 C625 728 612 722 604 712 Z" fill="url(#skirt)"/>
<path d="M604 697 L604 714 C606 717 608 719 610.4 719.3 C625 727 640 733 654.8 735.5 C675 739 695 740.5 707.4 740.5 L718 690 L830 640 L847 636 L812 626 L760 622 L729 612 Z" fill="url(#sfront)"/>
<path d="M606.4 666.8 C609 660 612 656 616.5 654.6 L731.4 617 L737 619 L729 636 L723.6 646.8 L604 694 C603.5 688 604 675 606.4 666.8 Z" fill="#4a4a4a"/>
<path d="M604 694.5 L723.6 647.3" fill="none" stroke="#5a5a5a" stroke-width="1"/>
<path d="M643.85 651.12 L683.85 657.92 A1.5 1.5 0 0 1 683.35 660.88 L643.35 654.08 A1.5 1.5 0 0 1 643.85 651.12 Z" fill="none" stroke="#ff3420" stroke-width="0.95" opacity="0.9"/>
<path d="M652.62 647.42 L691.72 653.79 A1.5 1.5 0 0 1 691.24 656.75 L652.14 650.38 A1.5 1.5 0 0 1 652.62 647.42 Z" fill="none" stroke="#ff4322" stroke-width="0.95" opacity="0.9"/>
<path d="M661.39 643.72 L699.59 649.68 A1.5 1.5 0 0 1 699.13 652.64 L660.93 646.68 A1.5 1.5 0 0 1 661.39 643.72 Z" fill="none" stroke="#ff5325" stroke-width="0.95" opacity="0.9"/>
<path d="M670.16 640.02 L707.46 645.57 A1.5 1.5 0 0 1 707.02 648.54 L669.72 642.98 A1.5 1.5 0 0 1 670.16 640.02 Z" fill="none" stroke="#ff6227" stroke-width="0.95" opacity="0.9"/>
<path d="M678.93 636.31 L715.33 641.48 A1.5 1.5 0 0 1 714.91 644.45 L678.51 639.29 A1.5 1.5 0 0 1 678.93 636.31 Z" fill="none" stroke="#fd7129" stroke-width="0.95" opacity="0.9"/>
<path d="M687.70 632.61 L723.20 637.41 A1.5 1.5 0 0 1 722.80 640.38 L687.30 635.59 A1.5 1.5 0 0 1 687.70 632.61 Z" fill="none" stroke="#fa7f2a" stroke-width="0.95" opacity="0.9"/>
<path d="M696.47 628.91 L731.07 633.34 A1.5 1.5 0 0 1 730.69 636.32 L696.09 631.89 A1.5 1.5 0 0 1 696.47 628.91 Z" fill="none" stroke="#f78c2b" stroke-width="0.95" opacity="0.9"/>
<path d="M705.24 625.21 L738.94 629.29 A1.5 1.5 0 0 1 738.58 632.27 L704.88 628.19 A1.5 1.5 0 0 1 705.24 625.21 Z" fill="none" stroke="#f49a2c" stroke-width="0.95" opacity="0.9"/>
<path d="M714.01 621.51 L746.81 625.25 A1.5 1.5 0 0 1 746.47 628.23 L713.67 624.49 A1.5 1.5 0 0 1 714.01 621.51 Z" fill="none" stroke="#eda12d" stroke-width="0.95" opacity="0.9"/>
<path d="M722.78 617.81 L754.68 621.22 A1.5 1.5 0 0 1 754.36 624.20 L722.46 620.79 A1.5 1.5 0 0 1 722.78 617.81 Z" fill="none" stroke="#e7a92f" stroke-width="0.95" opacity="0.9"/>
<path d="M731.55 614.11 L762.55 617.21 A1.5 1.5 0 0 1 762.25 620.19 L731.25 617.09 A1.5 1.5 0 0 1 731.55 614.11 Z" fill="none" stroke="#e0b030" stroke-width="0.95" opacity="0.9"/>
<path d="M691.08 660.93 L732.08 668.72 A1.5 1.5 0 0 1 731.52 671.66 L690.52 663.87 A1.5 1.5 0 0 1 691.08 660.93 Z" fill="none" stroke="#3a3cff" stroke-width="0.95" opacity="0.9"/>
<path d="M699.86 657.32 L739.86 664.44 A1.5 1.5 0 0 1 739.34 667.40 L699.34 660.28 A1.5 1.5 0 0 1 699.86 657.32 Z" fill="none" stroke="#3a49fc" stroke-width="0.95" opacity="0.9"/>
<path d="M708.65 653.72 L747.65 660.19 A1.5 1.5 0 0 1 747.15 663.15 L708.15 656.68 A1.5 1.5 0 0 1 708.65 653.72 Z" fill="none" stroke="#3a56f9" stroke-width="0.95" opacity="0.9"/>
<path d="M717.43 650.12 L755.43 655.97 A1.5 1.5 0 0 1 754.97 658.93 L716.97 653.08 A1.5 1.5 0 0 1 717.43 650.12 Z" fill="none" stroke="#3a62f6" stroke-width="0.95" opacity="0.9"/>
<path d="M726.21 646.51 L763.21 651.77 A1.5 1.5 0 0 1 762.79 654.74 L725.79 649.49 A1.5 1.5 0 0 1 726.21 646.51 Z" fill="none" stroke="#3a71f3" stroke-width="0.95" opacity="0.9"/>
<path d="M734.99 642.91 L770.99 647.59 A1.5 1.5 0 0 1 770.61 650.57 L734.61 645.89 A1.5 1.5 0 0 1 734.99 642.91 Z" fill="none" stroke="#3a82f1" stroke-width="0.95" opacity="0.9"/>
<path d="M743.78 639.31 L778.78 643.44 A1.5 1.5 0 0 1 778.42 646.42 L743.42 642.29 A1.5 1.5 0 0 1 743.78 639.31 Z" fill="none" stroke="#3a93ef" stroke-width="0.95" opacity="0.9"/>
<path d="M752.56 635.71 L786.56 639.31 A1.5 1.5 0 0 1 786.24 642.30 L752.24 638.69 A1.5 1.5 0 0 1 752.56 635.71 Z" fill="none" stroke="#3aa4ee" stroke-width="0.95" opacity="0.9"/>
<path d="M761.34 632.11 L794.34 635.21 A1.5 1.5 0 0 1 794.06 638.20 L761.06 635.09 A1.5 1.5 0 0 1 761.34 632.11 Z" fill="none" stroke="#39b2ef" stroke-width="0.95" opacity="0.9"/>
<path d="M770.12 628.51 L802.12 631.13 A1.5 1.5 0 0 1 801.88 634.12 L769.88 631.49 A1.5 1.5 0 0 1 770.12 628.51 Z" fill="none" stroke="#38c0f0" stroke-width="0.95" opacity="0.9"/>
<path d="M779.3 626.5 L801 632" fill="none" stroke="#30c4f0" stroke-width="1.2" opacity="0.85"/>
<path d="M812 684 L817 684 L815 704 L811 704 Z" fill="#565656"/>
<path d="M747 740 L753 740 L749 760 L745 760 Z" fill="#565656"/>
<path d="M598 647.7 C603 645 607 643.5 612 642 L654 628 L728.5 609.8 C733 609.5 735 612 730 615.4 L654 636.5 L619 652 C615 654 612.5 656 610.7 659 C607 663 605.5 666 605 670 C604 678 603.5 686 603.7 692.6 L604.4 715 C598 714.5 594 714 591 713.6 C585 712 581 711 578.4 709.4 C577 705 576.3 701 576.3 698 L575.6 684 C576 678 577 674 578.4 670 C581 664 584 659 586.8 656 C590 652 594 649.5 598 647.7 Z" fill="#575757"/>
<clipPath id="lbclip"><path d="M598 647.7 C603 645 607 643.5 612 642 L654 628 L728.5 609.8 C733 609.5 735 612 730 615.4 L654 636.5 L619 652 C615 654 612.5 656 610.7 659 C607 663 605.5 666 605 670 C604 678 603.5 686 603.7 692.6 L604.4 715 C598 714.5 594 714 591 713.6 C585 712 581 711 578.4 709.4 C577 705 576.3 701 576.3 698 L575.6 684 C576 678 577 674 578.4 670 C581 664 584 659 586.8 656 C590 652 594 649.5 598 647.7 Z"/></clipPath>
<g clip-path="url(#lbclip)">
<path d="M581 712 C579 690 580 672 590 656 C600 646 615 640 654 631 L730 612" fill="none" stroke="#707070" stroke-width="5" opacity="0.9" filter="url(#bl15)"/>
<path d="M605 716 C603 695 604 675 610 662 C616 654 630 648 654 640 L732 618" fill="none" stroke="#4a4a4a" stroke-width="4" opacity="0.9" filter="url(#bl15)"/>
<path d="M576 700 C575 680 580 664 590 653" fill="none" stroke="#4c4c4c" stroke-width="3" opacity="0.8" filter="url(#bl1)"/>
</g>
<defs><linearGradient id="rside2" gradientUnits="userSpaceOnUse" x1="772" y1="648" x2="792" y2="694"><stop offset="0" stop-color="#6a6a6a"/><stop offset="0.22" stop-color="#606060"/><stop offset="0.55" stop-color="#4c4c4c"/><stop offset="1" stop-color="#3e3e3e"/></linearGradient>
<radialGradient id="rendH" cx="0.5" cy="0.5" r="0.5"><stop offset="0" stop-color="#747474" stop-opacity="0.9"/><stop offset="1" stop-color="#747474" stop-opacity="0"/></radialGradient></defs>
<path d="M724.3 673.7 C731 670.5 737 669 743.9 668.9 L812.3 629.8 C816 628.5 819 629 822 629.8 C830 633 837 638 841.6 644.4 C843 647 843 650 842.4 652.6 C840 660 837 666 833.4 672.1 L748.7 740.5 C745 745 740 748 735.7 748.7 C729 749 722 748.5 716.2 747 C711 744 708 739 706.4 734 C703.5 727 702.3 719 702.3 711.2 C702.5 705 704 699 706.4 693.3 C708.5 688 711 684 714.5 680.3 C717.5 677 721 675 724.3 673.7 Z" fill="url(#rside2)"/>
<clipPath id="rbclip"><path d="M724.3 673.7 C731 670.5 737 669 743.9 668.9 L812.3 629.8 C816 628.5 819 629 822 629.8 C830 633 837 638 841.6 644.4 C843 647 843 650 842.4 652.6 C840 660 837 666 833.4 672.1 L748.7 740.5 C745 745 740 748 735.7 748.7 C729 749 722 748.5 716.2 747 C711 744 708 739 706.4 734 C703.5 727 702.3 719 702.3 711.2 C702.5 705 704 699 706.4 693.3 C708.5 688 711 684 714.5 680.3 C717.5 677 721 675 724.3 673.7 Z"/></clipPath>
<g clip-path="url(#rbclip)">
<path d="M700 690 C710 675 725 668 745 668 C752 690 754 720 756 745 L700 752 Z" fill="#5a5a5a" filter="url(#bl2)"/>
<ellipse cx="727" cy="704" rx="13" ry="26" fill="url(#rendH)"/>
<path d="M746 672 C752 690 753 715 756 742" fill="none" stroke="#3e3e3e" stroke-width="3" opacity="0.5" filter="url(#bl2)"/>
<path d="M726 676 C733 672 739 671 745 671.5 L813 633" fill="none" stroke="#7c7c7c" stroke-width="2.2" opacity="0.55" filter="url(#bl1)"/>
</g>
</svg>


<div class="t" style="left:1241px;top:850px;font-size:11px;color:#3a5fcf">About</div>
</body></html>
